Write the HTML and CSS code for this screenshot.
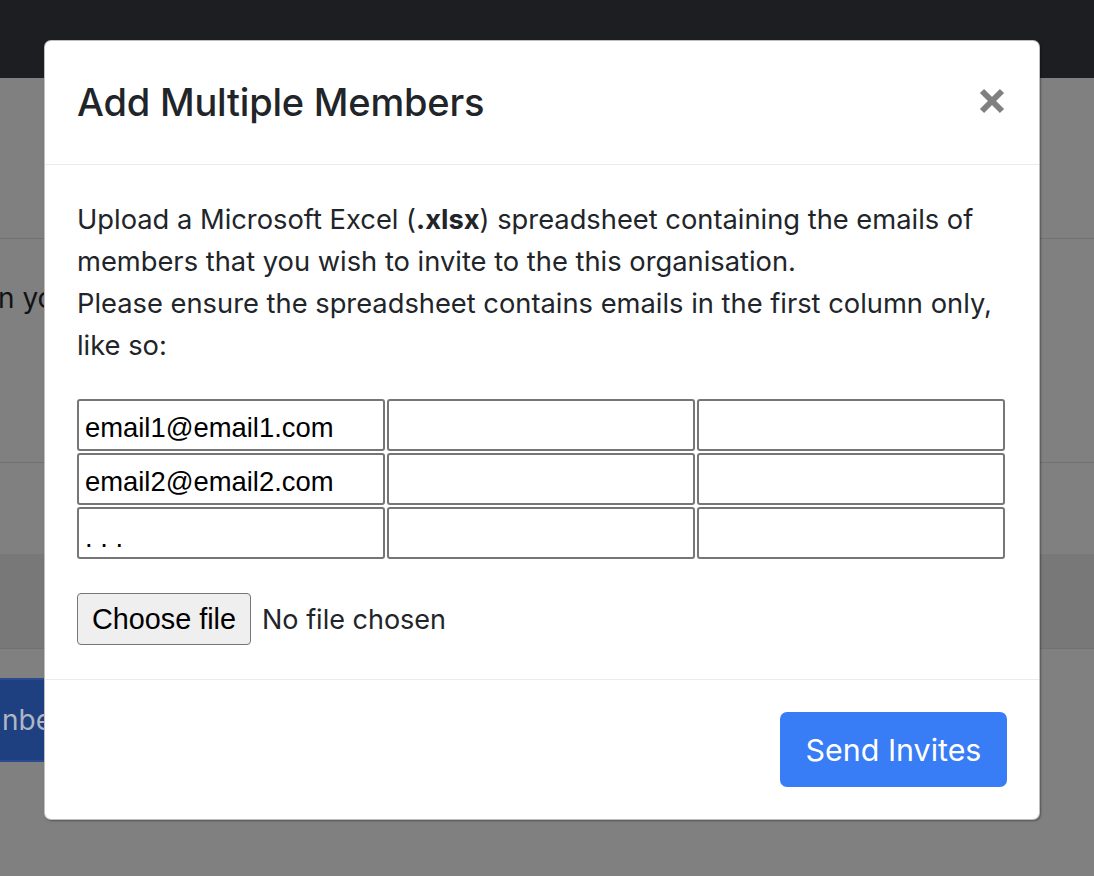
FILE: index.html
```html
<!DOCTYPE html>
<html lang="en">
<head>
<meta charset="utf-8">
<title>Add Multiple Members</title>
<link rel="stylesheet" href="styles.css">
</head>
<body>
<div class="page">
  <div class="navbar"></div>
  <div class="row row-a"></div>
  <div class="row row-b"><span class="bg-text">n your</span></div>
  <div class="row row-c"></div>
  <div class="row row-d"></div>
  <div class="row row-e"><span class="bg-btn">nbers</span></div>
</div>

<div class="modal">
  <div class="modal-header">
    <h4 class="modal-title">Add Multiple Members</h4>
    <button class="close" aria-label="Close">
      <svg width="26" height="26" viewBox="0 0 26 26"><path d="M3 3 L23 23 M23 3 L3 23" stroke="#808080" stroke-width="6" stroke-linecap="butt"/></svg>
    </button>
  </div>
  <div class="modal-body">
    <p class="intro">Upload a Microsoft Excel (<span class="ext">.xlsx</span>) spreadsheet containing the emails of members that you wish to invite to the this organisation.<br>Please ensure the spreadsheet contains emails in the first column only, like so:</p>
    <div class="sheet">
      <div class="cell">email1@email1.com</div>
      <div class="cell"></div>
      <div class="cell"></div>
      <div class="cell">email2@email2.com</div>
      <div class="cell"></div>
      <div class="cell"></div>
      <div class="cell dots">. . .</div>
      <div class="cell"></div>
      <div class="cell"></div>
    </div>
    <div class="file-row">
      <button class="file-btn">Choose file</button>
      <span class="file-name">No file chosen</span>
    </div>
  </div>
  <div class="modal-footer">
    <button class="btn-primary">Send Invites</button>
  </div>
</div>
</body>
</html>
```
FILE: styles.css
```css
html, body {
  margin: 0;
  padding: 0;
}
body {
  background: #808080;
  font-family: Inter, "Noto Sans", sans-serif;
  color: #212529;
  width: 1094px;
  height: 876px;
  overflow: hidden;
  position: relative;
}
.page {
  display: flex;
  flex-direction: column;
}
.navbar {
  height: 78px;
  background: #1c1e22;
}
.row {
  box-sizing: border-box;
}
.row-a {
  height: 161px;
  border-bottom: 1px solid #717171;
}
.row-b {
  height: 224px;
  border-bottom: 1px solid #717171;
  padding-top: 38px;
}
.bg-text {
  font-size: 28px;
  line-height: 42px;
  color: #121315;
  margin-left: -2px;
}
.row-c {
  height: 91px;
}
.row-d {
  height: 95px;
  background: #787878;
  border-bottom: 1px solid #717171;
}
.row-e {
  padding-top: 29px;
}
.bg-btn {
  display: inline-block;
  margin-left: -10px;
  height: 80px;
  line-height: 80px;
  padding: 0 20px 0 10px;
  background: #1e3f80;
  border: 2px solid #2b4c8c;
  border-radius: 6px;
  color: #aeb6c6;
  font-size: 28px;
}

.modal {
  position: absolute;
  left: 44px;
  top: 40px;
  width: 996px;
  box-sizing: border-box;
  background: #fff;
  border: 1px solid rgba(0,0,0,0.25);
  border-radius: 7px;
  box-shadow: 1px 1px 2px rgba(0,0,0,0.35);
  display: flex;
  flex-direction: column;
}
.modal-header {
  height: 124px;
  box-sizing: border-box;
  border-bottom: 1px solid #e9ecef;
  display: flex;
  align-items: center;
  justify-content: space-between;
  padding: 0 34px 2px 32px;
}
.modal-title {
  margin: 0;
  font-size: 38px;
  font-weight: 500;
  line-height: 56px;
  letter-spacing: -0.2px;
}
.close {
  background: none;
  border: 0;
  padding: 0;
  width: 26px;
  height: 26px;
  display: flex;
  margin-bottom: 2px;
}
.modal-body {
  padding: 34px 32px;
}
.intro {
  margin: 0 0 32px;
  font-size: 27.3px;
  line-height: 42px;
}
.ext {
  font-weight: 700;
}
.sheet {
  display: grid;
  grid-template-columns: repeat(3, 308px);
  grid-auto-rows: 52px;
  gap: 2px;
}
.cell {
  box-sizing: border-box;
  border: 2px solid #767676;
  border-radius: 3px;
  padding: 2px 6px 0;
  font-family: "Liberation Sans", Arial, sans-serif;
  font-size: 27.4px;
  line-height: 50px;
  color: #000;
  white-space: nowrap;
  overflow: hidden;
}
.cell.dots {
  line-height: 54px;
}
.file-row {
  margin-top: 34px;
  display: flex;
  align-items: center;
  height: 52px;
}
.file-btn {
  box-sizing: border-box;
  height: 52px;
  width: 174px;
  background: #efefef;
  border: 1.5px solid #767676;
  border-radius: 4px;
  font-family: "Liberation Sans", Arial, sans-serif;
  font-size: 28.8px;
  color: #000;
  padding: 0;
}
.file-name {
  margin-left: 11px;
  font-size: 27px;
  color: #212529;
}
.modal-footer {
  border-top: 1px solid #e9ecef;
  padding: 32px;
  display: flex;
  justify-content: flex-end;
}
.btn-primary {
  box-sizing: border-box;
  width: 227px;
  height: 75px;
  background: #387cf6;
  color: #fff;
  border: 0;
  border-radius: 7px;
  font-family: Inter, "Noto Sans", sans-serif;
  font-size: 30.4px;
  padding: 0;
}
```
